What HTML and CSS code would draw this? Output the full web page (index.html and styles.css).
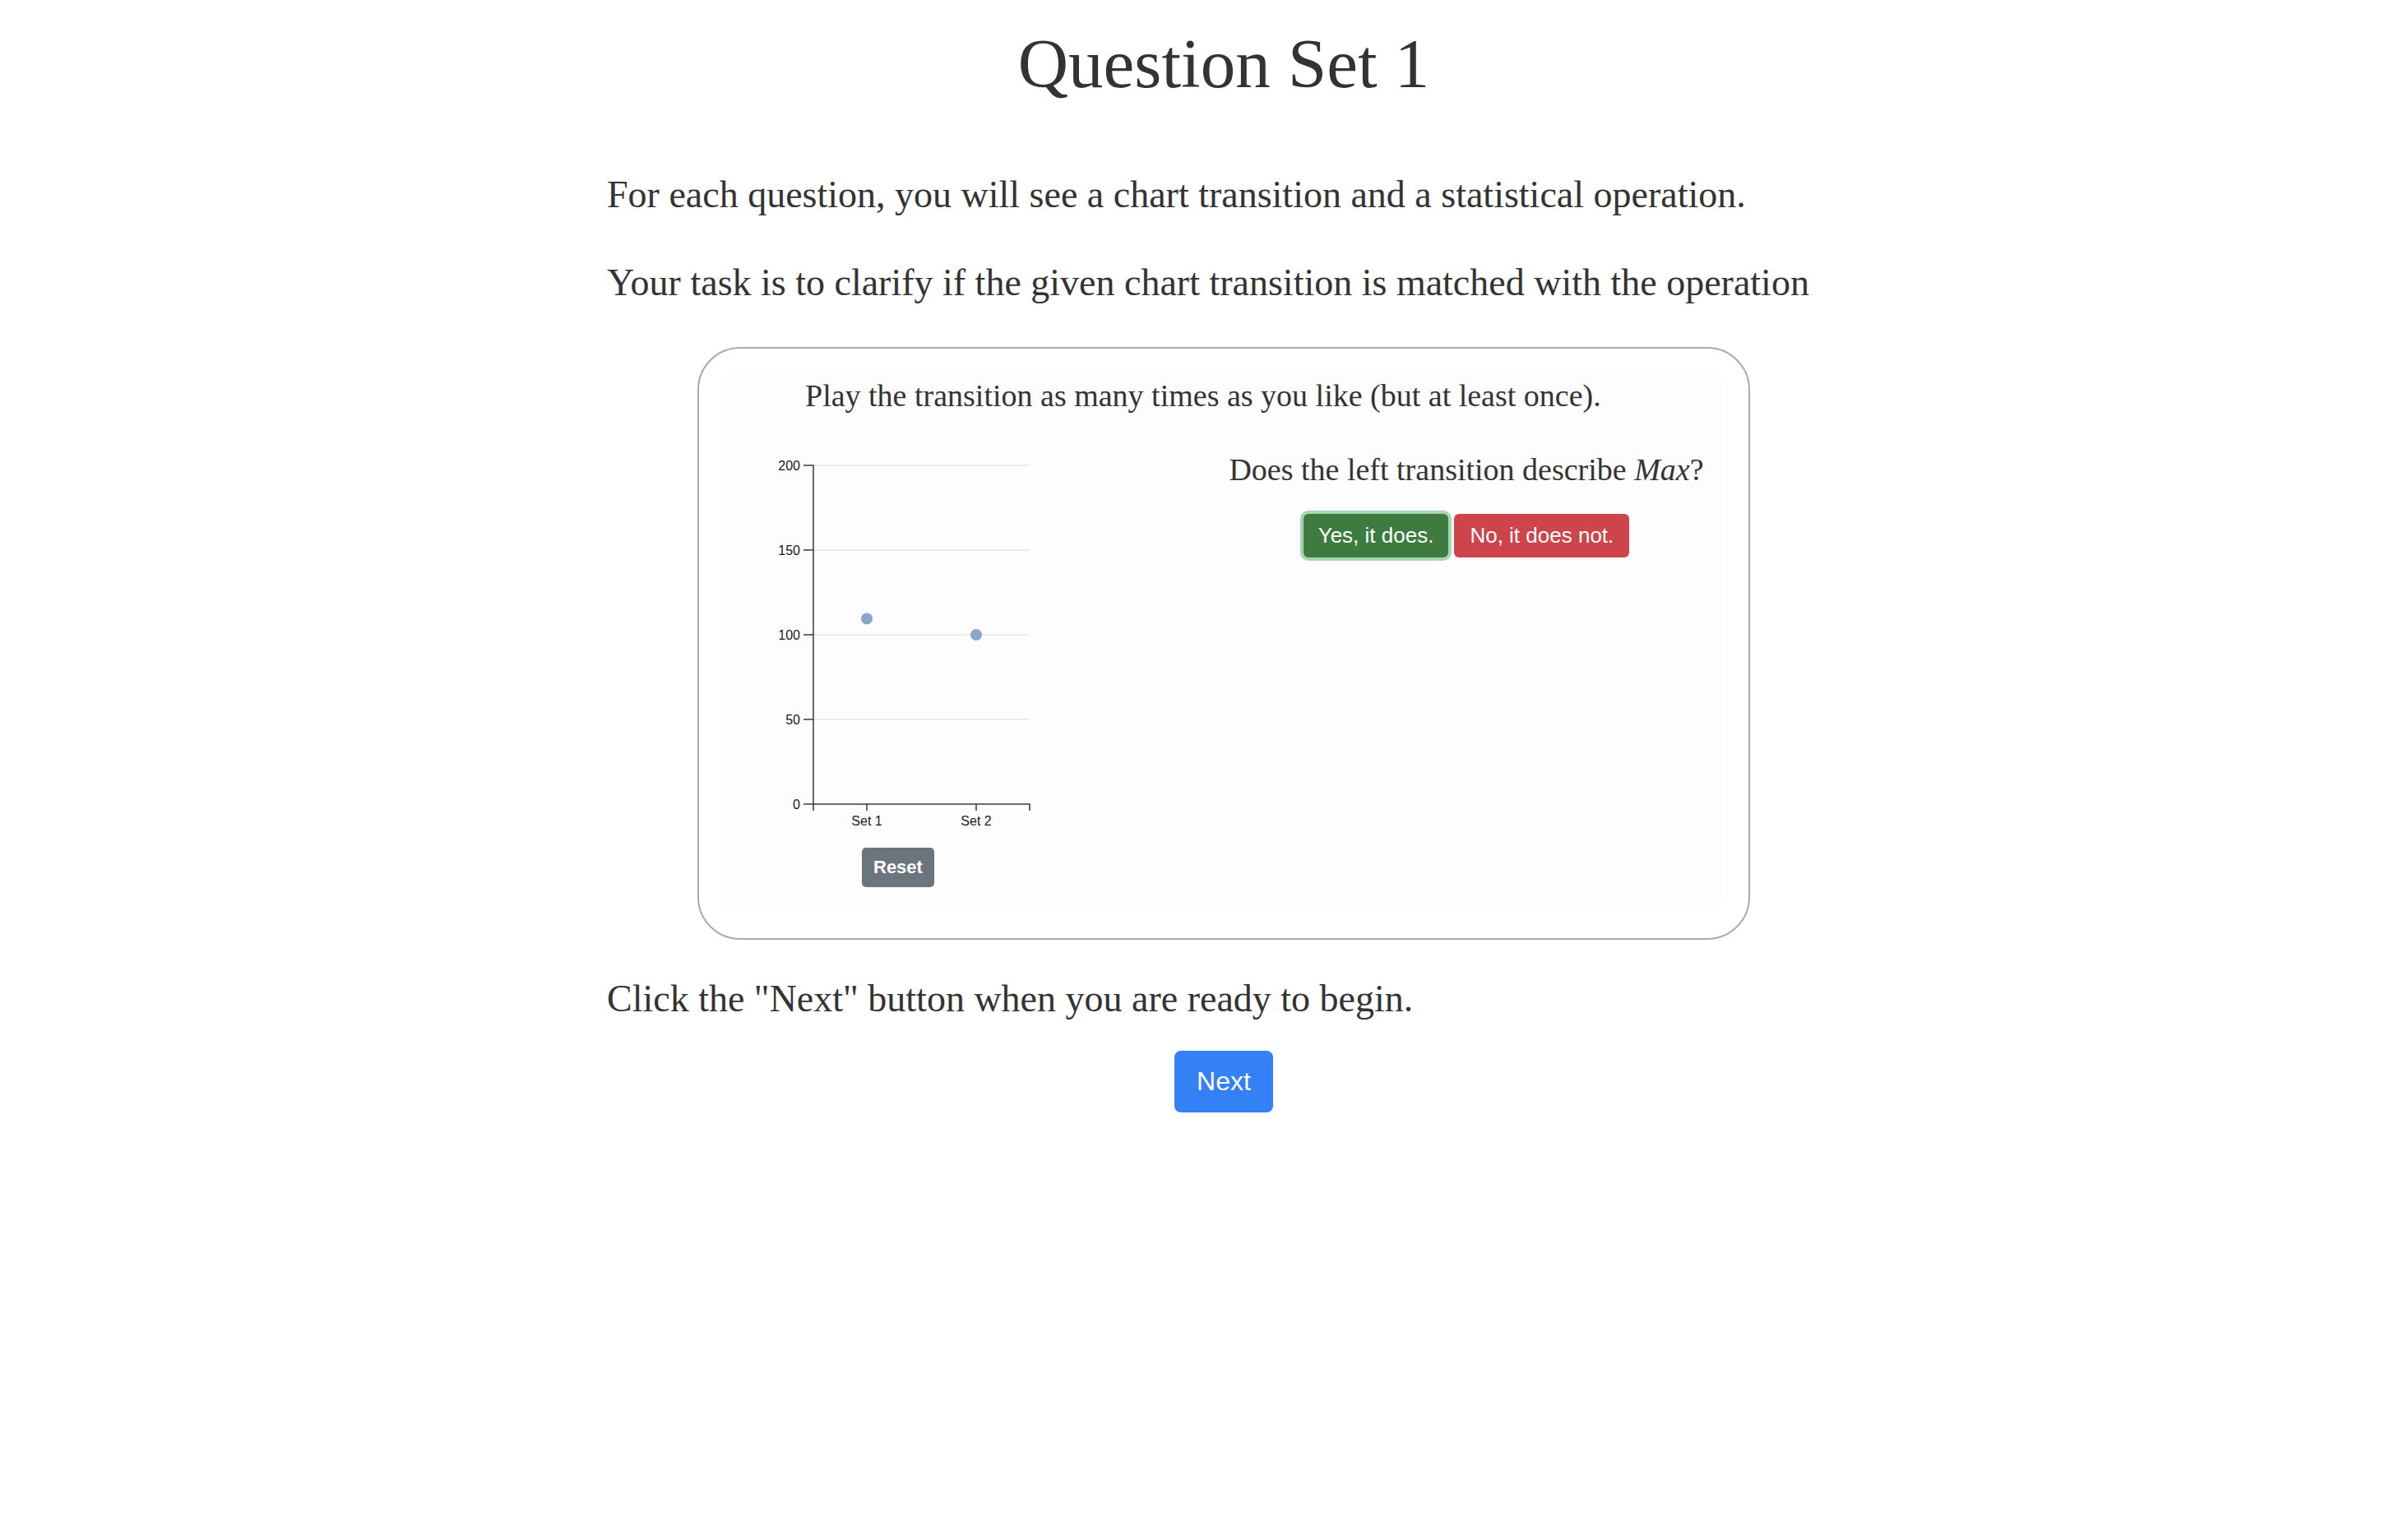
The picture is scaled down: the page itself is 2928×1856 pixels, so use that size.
FILE: index.html
```html
<!DOCTYPE html>
<html lang="en">
<head>
<meta charset="utf-8">
<title>Question Set 1</title>
<link rel="stylesheet" href="styles.css">
</head>
<body>
<main class="page">
  <h1 class="title">Question Set 1</h1>
  <p class="intro">For each question, you will see a chart transition and a statistical operation.</p>
  <p class="intro intro-second">Your task is to clarify if the given chart transition is matched with the operation</p>

  <div class="example">
    <div class="panel">
      <p class="panel-hint">Play the transition as many times as you like (but at least once).</p>
      <div class="panel-row">
        <div class="chart-col">
          <svg class="chart" viewBox="0 0 340 465" width="340" height="465">
            <g class="grid">
              <line x1="60" x2="323" y1="21" y2="21"/>
              <line x1="60" x2="323" y1="124" y2="124"/>
              <line x1="60" x2="323" y1="227" y2="227"/>
              <line x1="60" x2="323" y1="330" y2="330"/>
            </g>
            <g class="axis">
              <path d="M48,21H60V433H48"/>
              <path d="M48,124H60M48,227H60M48,330H60"/>
              <path d="M60,441V433H323V441"/>
              <path d="M125,433V441M258,433V441"/>
            </g>
            <g class="y-labels">
              <text x="44" y="26.5">200</text>
              <text x="44" y="129.5">150</text>
              <text x="44" y="232.5">100</text>
              <text x="44" y="335.5">50</text>
              <text x="44" y="438.5">0</text>
            </g>
            <g class="x-labels">
              <text x="125" y="459">Set 1</text>
              <text x="258" y="459">Set 2</text>
            </g>
            <circle class="dot" cx="125" cy="207.5" r="7"/>
            <circle class="dot" cx="258" cy="227" r="7"/>
          </svg>
          <button class="btn btn-reset">Reset</button>
        </div>
        <div class="question-col">
          <p class="question">Does the left transition describe <em>Max</em>?</p>
          <div class="answers">
            <button class="btn btn-answer btn-yes">Yes, it does.</button>
            <button class="btn btn-answer btn-no">No, it does not.</button>
          </div>
        </div>
      </div>
    </div>
  </div>

  <p class="intro intro-ready">Click the "Next" button when you are ready to begin.</p>
  <div class="next-row">
    <button class="btn btn-next">Next</button>
  </div>
</main>
</body>
</html>
```
FILE: styles.css
```css
html, body {
  background: #ffffff;
}

body {
  margin: 0;
  padding-left: 48px;
  color: #333333;
  font-family: "Liberation Serif", "Times New Roman", serif;
}

.page {
  width: 1500px;
  margin: 0 auto;
}

.title {
  font-size: 85px;
  line-height: 102px;
  font-weight: 400;
  text-align: center;
  margin: 26px 0 74px;
}

.intro {
  font-size: 46px;
  line-height: 69px;
  margin: 0;
}

.intro-second {
  margin-top: 38px;
}

.example {
  box-sizing: border-box;
  width: 1280px;
  margin: 44px auto 0;
  border: 2px solid #aaaaaa;
  border-radius: 52px;
  padding: 28px 31px 31px 29px;
}

.panel {
  box-sizing: border-box;
  height: 658px;
  background: #fdfdfd;
  border-radius: 18px;
}

.panel-hint {
  margin: 0;
  padding: 6px 0 0 100px;
  font-size: 38px;
  line-height: 46px;
}

.panel-row {
  display: flex;
  margin-top: 41px;
}

.chart-col {
  box-sizing: border-box;
  width: 593px;
  padding-left: 50px;
  display: flex;
  flex-direction: column;
  align-items: flex-start;
}

.chart {
  display: block;
  width: 340px;
  height: 465px;
}

.grid line {
  stroke: #e4e4e4;
  stroke-width: 1.5;
}

.axis path {
  fill: none;
  stroke: #3a3a3a;
  stroke-width: 1.5;
}

.y-labels text,
.x-labels text {
  font-family: "Liberation Sans", Arial, sans-serif;
  font-size: 16px;
  fill: #1a1a1a;
}

.y-labels text {
  text-anchor: end;
}

.x-labels text {
  text-anchor: middle;
}

.dot {
  fill: #8ba4c7;
}

.question-col {
  width: 622px;
  text-align: center;
  padding-top: 3px;
}

.question {
  margin: 0;
  font-size: 38px;
  line-height: 46px;
}

.answers {
  display: flex;
  justify-content: center;
  gap: 7px;
  margin-top: 31px;
}

.btn {
  font-family: "Liberation Sans", Arial, sans-serif;
  color: #ffffff;
  border: 0;
  margin: 0;
  cursor: pointer;
}

.btn-answer {
  font-size: 26px;
  line-height: 39px;
  padding: 7px 18px;
  border-radius: 6px;
}

.btn-yes {
  background: #3d7b40;
  box-shadow: 0 0 0 4px #a9d6b0;
}

.btn-no {
  background: #cd444b;
  padding: 7px 19px;
}

.btn-reset {
  margin: 21px 0 0 119px;
  background: #6c757d;
  font-size: 22px;
  font-weight: 700;
  line-height: 34px;
  padding: 7px 14px;
  border-radius: 5px;
}

.intro-ready {
  margin-top: 37px;
}

.next-row {
  text-align: center;
  margin-top: 29px;
}

.btn-next {
  background: #3381f5;
  font-size: 32px;
  line-height: 49px;
  padding: 13px 27px;
  border-radius: 8px;
}
```
